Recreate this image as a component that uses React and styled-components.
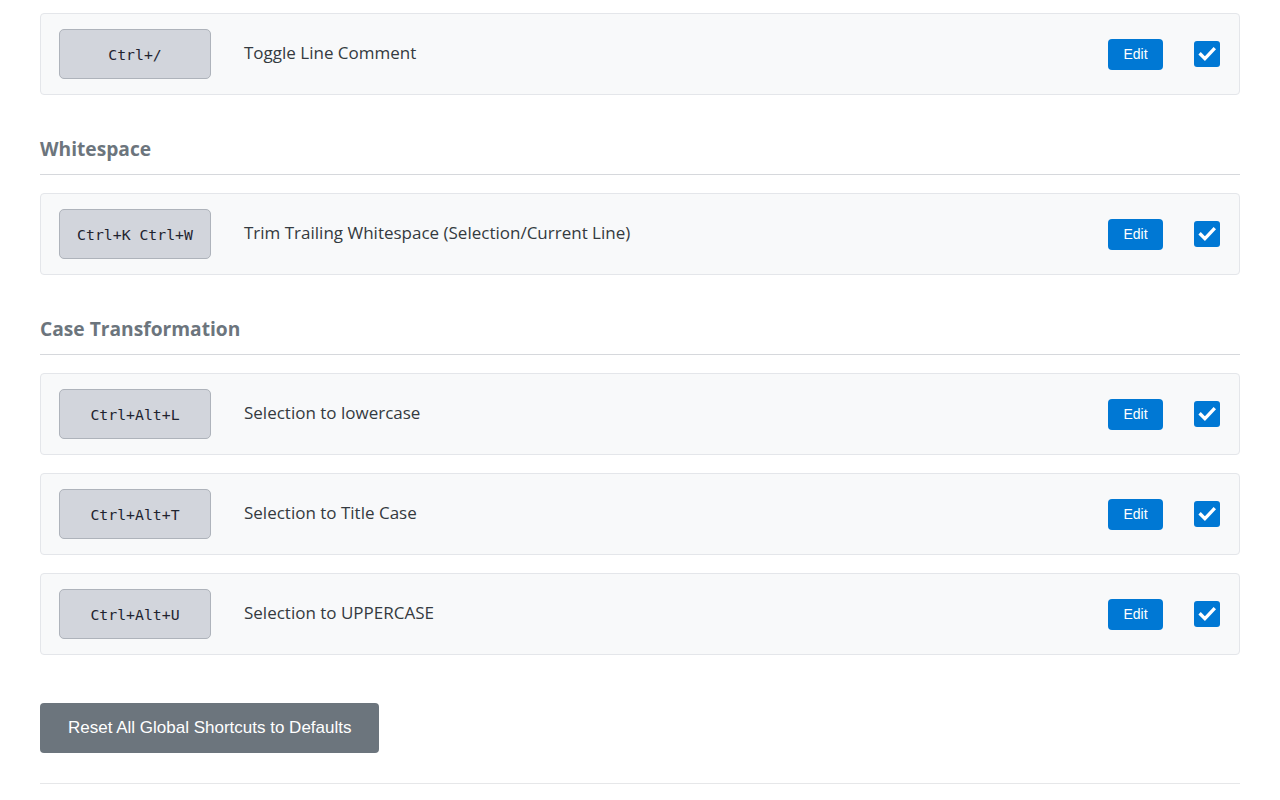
import React from "react";
import styled, { createGlobalStyle } from "styled-components";

const GlobalStyle = createGlobalStyle`
  body {
    margin: 0;
    background: #ffffff;
    font-family: "Open Sans", "Noto Sans", sans-serif;
    color: #343a40;
  }
`;

const Page = styled.div`
  width: 1200px;
  padding: 13px 40px 0;
`;

const SectionTitle = styled.h3`
  margin: 42px 0 18px;
  padding-bottom: 13px;
  border-bottom: 1px solid #d6d8dc;
  font-size: 19.2px;
  line-height: 24px;
  font-weight: 700;
  color: #6c757d;
`;

const Row = styled.div`
  display: flex;
  align-items: center;
  padding: 15px 18px;
  margin-bottom: 18px;
  background: #f8f9fa;
  border: 1px solid #e4e6ea;
  border-radius: 4px;
`;

const Keys = styled.kbd`
  box-sizing: border-box;
  width: 152px;
  height: 50px;
  margin-right: 33px;
  display: flex;
  align-items: center;
  justify-content: center;
  background: #d2d5dc;
  border: 1px solid #aeb3bb;
  border-radius: 5px;
  font-family: "DejaVu Sans Mono", "Liberation Mono", monospace;
  font-size: 14.8px;
  color: #1f2430;
`;

const Label = styled.span`
  flex: 1;
  margin-bottom: 3px;
  font-size: 17px;
  color: #343a40;
`;

const EditButton = styled.button`
  width: 55px;
  height: 31px;
  margin-right: 31px;
  padding: 0;
  border: none;
  border-radius: 4px;
  background: #0078d4;
  color: #ffffff;
  font-family: "Liberation Sans", Arial, sans-serif;
  font-size: 14px;
  cursor: pointer;
`;

const Check = styled.span`
  width: 26px;
  height: 26px;
  margin-right: 1px;
  display: flex;
  align-items: center;
  justify-content: center;
  background: #0078d4;
  border-radius: 3px;
`;

const Footer = styled.div`
  padding-top: 30px;
  padding-bottom: 30px;
  border-bottom: 1px solid #e6e7e9;
`;

const ResetButton = styled.button`
  height: 50px;
  padding: 0 28px;
  border: none;
  border-radius: 4px;
  background: #6c757d;
  color: #ffffff;
  font-family: "Liberation Sans", Arial, sans-serif;
  font-size: 17px;
  cursor: pointer;
`;

const CheckMark = () => (
  <svg width="20" height="20" viewBox="0 0 24 24" fill="none">
    <path d="M4.5 12.5l5 5L20 6.5" stroke="#fff" strokeWidth="4" strokeLinecap="square" />
  </svg>
);

const Shortcut = ({ keys, label }) => (
  <Row>
    <Keys>{keys}</Keys>
    <Label>{label}</Label>
    <EditButton>Edit</EditButton>
    <Check>
      <CheckMark />
    </Check>
  </Row>
);

const App = () => {
  return (
    <Page>
      <GlobalStyle />
      <Shortcut keys="Ctrl+/" label="Toggle Line Comment" />

      <SectionTitle>Whitespace</SectionTitle>
      <Shortcut keys="Ctrl+K Ctrl+W" label="Trim Trailing Whitespace (Selection/Current Line)" />

      <SectionTitle>Case Transformation</SectionTitle>
      <Shortcut keys="Ctrl+Alt+L" label="Selection to lowercase" />
      <Shortcut keys="Ctrl+Alt+T" label="Selection to Title Case" />
      <Shortcut keys="Ctrl+Alt+U" label="Selection to UPPERCASE" />

      <Footer>
        <ResetButton>Reset All Global Shortcuts to Defaults</ResetButton>
      </Footer>
    </Page>
  );
};

export default App;
